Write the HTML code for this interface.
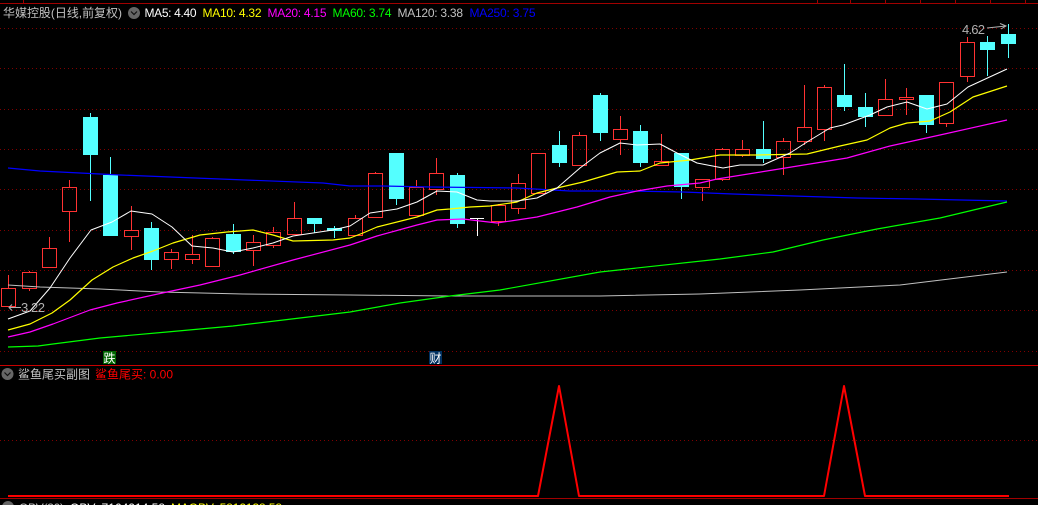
<!DOCTYPE html>
<html><head><meta charset="utf-8"><style>
html,body{margin:0;padding:0;background:#000;width:1038px;height:505px;overflow:hidden}
svg{display:block}
text{font-family:"Liberation Sans","WenQuanYi Zen Hei","Noto Sans CJK SC",sans-serif;font-size:12px}
</style></head><body>
<svg width="1038" height="505" viewBox="0 0 1038 505" xmlns="http://www.w3.org/2000/svg">
<rect width="1038" height="505" fill="#000"/>
<path d="M0 28.5H1038M0 68.5H1038M0 109.5H1038M0 149.5H1038M0 189.5H1038M0 230.5H1038M0 270.5H1038M0 310.5H1038M0 351.5H1038M0 440.5H1038" stroke="#800000" stroke-dasharray="1 3" fill="none"/>
<g shape-rendering="crispEdges" fill="none">
<path d="M0 3.5H1038M23.5 0V3M817.5 0V3M850.5 0V3M885.5 0V3M920.5 0V3M955.5 0V3M990.5 0V3M1025.5 0V3" stroke="#a00000"/>
<path d="M0 365.5H1038" stroke="#c80000"/>
<path d="M0 498.5H1038" stroke="#a00000"/>
<!-- red candles -->
<path stroke="#ff3232" d="M1.5 288.5h14v18h-14zM8.5 275v13
M22.5 272.5h14v16h-14zM29.5 271v1M29.5 288v3
M42.5 248.5h14v19h-14zM49.5 237v11
M62.5 187.5h14v24h-14zM69.5 180v7M69.5 211v31
M124.5 230.5h14v6h-14zM131.5 206v24M131.5 236v14
M164.5 252.5h14v7h-14zM171.5 249v3M171.5 259v10
M185.5 254.5h14v5h-14zM192.5 235v19M192.5 259v5
M205.5 238.5h14v28h-14zM212.5 237v1
M246.5 242.5h14v8h-14zM253.5 235v7M253.5 250v16
M266.5 232.5h14v13h-14zM273.5 227v5M273.5 245v3
M287.5 218.5h14v16h-14zM294.5 202v16
M348.5 218.5h14v17h-14zM355.5 215v3
M368.5 173.5h14v44h-14zM375.5 172v1
M409.5 187.5h14v28h-14zM416.5 180v7
M429.5 173.5h14v16h-14zM436.5 158v15M436.5 189v6
M491.5 205.5h14v16h-14zM498.5 204v1M498.5 221v5
M511.5 183.5h14v25h-14zM518.5 174v9M518.5 208v6
M531.5 153.5h14v40h-14z
M572.5 135.5h14v30h-14zM579.5 132v3
M613.5 129.5h14v10h-14zM620.5 116v13M620.5 139v16
M654.5 161.5h14v4h-14zM661.5 134v27
M695.5 179.5h14v8h-14zM702.5 187v14
M715.5 149.5h14v30h-14zM722.5 148v1M722.5 179v2
M735.5 149.5h14v6h-14zM742.5 140v9M742.5 155v2
M776.5 141.5h14v16h-14zM783.5 138v3M783.5 157v18
M797.5 127.5h14v14h-14zM804.5 85v42M804.5 141v4
M817.5 87.5h14v42h-14zM824.5 85v2M824.5 129v12
M878.5 99.5h14v16h-14zM885.5 79v20M885.5 115v1
M899.5 97.5h14v2h-14zM906.5 88v9M906.5 99v16
M939.5 82.5h14v41h-14zM946.5 123v4
M960.5 42.5h14v34h-14zM967.5 37v5M967.5 76v6"/>
<!-- cyan wicks -->
<path stroke="#54ffff" d="M90.5 113V201M110.5 157V236M151.5 222V270M233.5 224V254M314.5 218V233M334.5 226V238M396.5 153V205M457.5 173V228M559.5 131V167M600.5 93V141M640.5 125V167M681.5 153V199M763.5 121V163M844.5 64V111M865.5 93V127M926.5 95V133M987.5 36V76M1008.5 24V58"/>
<!-- cyan bodies -->
<path fill="#54ffff" d="M83 117h15v38h-15zM103 175h15v61h-15zM144 228h15v32h-15zM226 234h15v18h-15zM307 218h15v6h-15zM327 228h15v3h-15zM389 153h15v46h-15zM450 175h15v49h-15zM552 145h15v18h-15zM593 95h15v38h-15zM633 131h15v32h-15zM674 153h15v34h-15zM756 149h15v10h-15zM837 95h15v12h-15zM858 107h15v10h-15zM919 95h15v30h-15zM980 42h15v8h-15zM1001 34h15v10h-15z"/>
<!-- doji -->
<path stroke="#fff" d="M470 218.5H484M477.5 218V236"/>
</g>
<g fill="none" stroke-width="1.1" stroke-linejoin="round">
<!-- MA120 -->
<polyline stroke="#c0c0c0" stroke-width="1" points="8,285 40,287 100,289 160,292 243,294 350,295 450,296 600,296 700,294 800,290 900,285 1007,272"/>
<!-- MA250 -->
<polyline stroke="#0000ff" stroke-width="1.2" points="8,168 40,171 80,173 120,175 220,179 323,183 350,186 383,186 430,187 517,188 570,191 630,191 683,192 733,194 793,196 857,198 917,199 1007,201"/>
<!-- MA60 -->
<polyline stroke="#00ff00" stroke-width="1.2" points="8,347 38,346 53,344 100,338 167,332 233,326 300,318 350,312 400,303 450,296 500,290 600,272 720,259 773,252 823,240 877,229 940,218 1007,202"/>
<!-- MA20 -->
<polyline stroke="#ff00ff" stroke-width="1.2" points="8,337 30,332 53,324 90,310 117,303 167,292 200,285 240,275 293,260 350,245 377,236 417,225 437,220 463,219 497,223 537,217 577,207 610,197 637,191 667,186 700,183 717,179 773,170 847,158 890,146 940,135 1007,120"/>
<!-- MA10 -->
<polyline stroke="#ffff00" stroke-width="1.2" points="8,330 30,324 52,313 70,300 92,280 113,267 133,258 153,251 173,243 200,235 227,232 253,230 273,235 293,241 333,240 350,238 363,233 377,227 417,217 437,210 450,209 470,207 490,206 517,202 537,193 557,188 583,182 617,172 640,171 660,163 690,160 720,155 757,155 807,154 840,146 867,140 890,128 907,123 930,121 950,112 973,97 1007,86"/>
<!-- MA5 -->
<polyline stroke="#ffffff" stroke-width="1" points="8,319 30,311 50,288 70,258 91,230 112,222 131,211 152,214 172,227 192,246 213,248 233,252 253,248 273,243 293,236 313,233 333,230 350,226 370,213 397,209 417,202 437,191 457,192 477,200 490,201 517,201 537,198 557,188 580,168 600,153 620,143 637,145 660,144 677,153 697,163 723,168 740,165 763,165 790,153 807,142 830,128 843,125 870,115 887,107 907,102 927,109 947,104 968,87 1007,69"/>
<!-- sub chart -->
<polyline stroke="#ff0000" stroke-width="2" points="8,496 538,496 559,386 579,496 824,496 844,386 865,496 1009,496"/>
</g>
<!-- price labels -->
<path d="M987 28L1006 26M1000 23.5L1006 26L1001 29" stroke="#b0b0b0" fill="none"/>
<text x="962" y="34" fill="#b0b0b0" style="font-size:13px" textLength="23">4.62</text>
<path d="M9 307.5H21M12 304.5L9 307.5L12 310.5" stroke="#b0b0b0" fill="none"/>
<text x="21" y="312" fill="#b0b0b0" style="font-size:13px" textLength="24">3.22</text>
<!-- header -->
<text x="3" y="17" fill="#c0c0c0" textLength="119">华媒控股(日线,前复权)</text>
<circle cx="134" cy="13" r="6" fill="#666"/>
<path d="M131 11.5L134 14.5L137 11.5" stroke="#111" fill="none" stroke-width="1.2"/>
<text x="144.5" y="17" fill="#ffffff" textLength="52">MA5: 4.40</text>
<text x="202.5" y="17" fill="#ffff00" textLength="59">MA10: 4.32</text>
<text x="267.5" y="17" fill="#ff00ff" textLength="59">MA20: 4.15</text>
<text x="332.5" y="17" fill="#00ff00" textLength="59">MA60: 3.74</text>
<text x="397.5" y="17" fill="#c0c0c0" textLength="65.5">MA120: 3.38</text>
<text x="469.5" y="17" fill="#0000ff" textLength="66">MA250: 3.75</text>
<!-- markers -->
<rect x="103" y="351" width="13" height="13" fill="#006400"/>
<text x="103.5" y="362.5" fill="#fff">跌</text>
<rect x="429" y="351" width="13" height="13" fill="#003060"/>
<text x="429.5" y="362.5" fill="#fff">财</text>
<!-- sub header -->
<circle cx="7.5" cy="374" r="6" fill="#666"/>
<path d="M4.5 372.5L7.5 375.5L10.5 372.5" stroke="#111" fill="none" stroke-width="1.2"/>
<text x="18" y="378.5" fill="#c0c0c0" textLength="72">鲨鱼尾买副图</text>
<text x="95" y="378.5" fill="#ff0000" textLength="78">鲨鱼尾买: 0.00</text>
<!-- bottom clipped header -->
<circle cx="8" cy="507" r="6" fill="#666"/>
<text x="19" y="512" fill="#c0c0c0" textLength="45">OBV(30)</text>
<text x="70" y="512" fill="#ffffff" textLength="95">OBV: 7164214.58</text>
<text x="171" y="512" fill="#ffff00" textLength="111">MAOBV: 5812138.58</text>
</svg>
</body></html>
